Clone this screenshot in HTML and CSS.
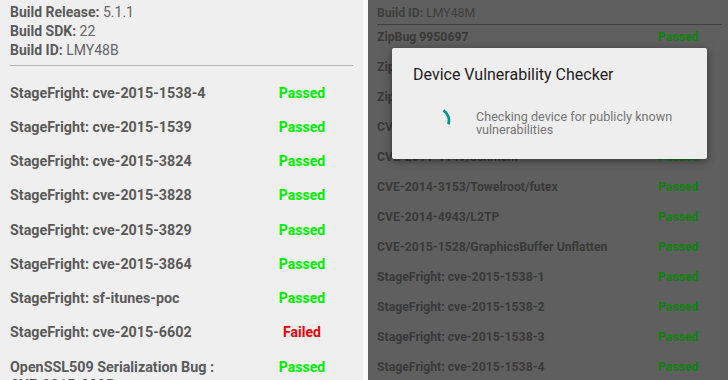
FILE: index.html
```html
<!DOCTYPE html>
<html lang="en">
<head>
    <meta charset="UTF-8">
    <meta name="viewport" content="width=device-width, initial-scale=1.0">
    <title>Device Vulnerability Checker</title>
    <link rel="stylesheet" href="styles.css">
</head>
<body>
    <div class="screens">
        <section class="screen screen-light">
            <div class="build-info">
                <div><b>Build Release:</b> 5.1.1</div>
                <div><b>Build SDK:</b> 22</div>
                <div><b>Build ID:</b> LMY48B</div>
            </div>
            <hr class="divider">
            <ul class="checks">
                <li class="check"><span>StageFright: cve-2015-1538-4</span><span class="status passed">Passed</span></li>
                <li class="check"><span>StageFright: cve-2015-1539</span><span class="status passed">Passed</span></li>
                <li class="check"><span>StageFright: cve-2015-3824</span><span class="status passed">Passed</span></li>
                <li class="check"><span>StageFright: cve-2015-3828</span><span class="status passed">Passed</span></li>
                <li class="check"><span>StageFright: cve-2015-3829</span><span class="status passed">Passed</span></li>
                <li class="check"><span>StageFright: cve-2015-3864</span><span class="status passed">Passed</span></li>
                <li class="check"><span>StageFright: sf-itunes-poc</span><span class="status passed">Passed</span></li>
                <li class="check"><span>StageFright: cve-2015-6602</span><span class="status failed">Failed</span></li>
                <li class="check"><span>OpenSSL509 Serialization Bug : <span class="cve-id">CVE-2015-3825</span></span><span class="status passed">Passed</span></li>
            </ul>
        </section>

        <section class="screen screen-dim">
            <div class="build-info">
                <div><b>Build SDK:</b> 22</div>
                <div><b>Build ID:</b> LMY48M</div>
            </div>
            <hr class="divider">
            <ul class="checks">
                <li class="check"><span>ZipBug 9950697</span><span class="status passed">Passed</span></li>
                <li class="check"><span>ZipBug 8219321</span><span class="status passed">Passed</span></li>
                <li class="check"><span>ZipBug 9695860</span><span class="status passed">Passed</span></li>
                <li class="check"><span>CVE-2013-6282/put_user/get_user</span><span class="status passed">Passed</span></li>
                <li class="check"><span>CVE-2011-1149/ashmem</span><span class="status passed">Passed</span></li>
                <li class="check"><span>CVE-2014-3153/Towelroot/futex</span><span class="status passed">Passed</span></li>
                <li class="check"><span>CVE-2014-4943/L2TP</span><span class="status passed">Passed</span></li>
                <li class="check"><span>CVE-2015-1528/GraphicsBuffer Unflatten</span><span class="status passed">Passed</span></li>
                <li class="check"><span>StageFright: cve-2015-1538-1</span><span class="status passed">Passed</span></li>
                <li class="check"><span>StageFright: cve-2015-1538-2</span><span class="status passed">Passed</span></li>
                <li class="check"><span>StageFright: cve-2015-1538-3</span><span class="status passed">Passed</span></li>
                <li class="check"><span>StageFright: cve-2015-1538-4</span><span class="status passed">Passed</span></li>
            </ul>

            <div class="dialog">
                <div class="dialog-title">Device Vulnerability Checker</div>
                <div class="dialog-body">
                    <svg class="spinner" width="32" height="32" viewBox="0 0 32 32">
                        <path d="M23.46 5.35 A13 13 0 0 1 28.56 19.36" fill="none" stroke="#009688" stroke-width="2.8"/>
                    </svg>
                    <div class="dialog-message">Checking device for publicly known vulnerabilities</div>
                </div>
            </div>
        </section>
    </div>
</body>
</html>
```

FILE: styles.css
```css
body {
    margin: 0;
    padding: 0;
    background-color: #f9f9f9;
    font-family: Roboto, "Liberation Sans", sans-serif;
}
.screens {
    display: flex;
    gap: 5px;
    height: 380px;
    overflow: hidden;
}
.screen {
    position: relative;
    overflow: hidden;
}

/* Left screen: results list */
.screen-light {
    width: 363px;
    background-color: #efefef;
    padding: 0 10px;
    box-sizing: border-box;
    color: #5a5a5a;
}
.screen-light .build-info {
    padding-top: 3px;
    font-size: 14px;
    line-height: 19.2px;
}
.build-info b {
    font-weight: 700;
}
.screen-light .build-info div {
    color: #666;
}
.screen-light .build-info b {
    color: #5a5a5a;
}
.divider {
    margin: 0;
    border: none;
    height: 1px;
}
.screen-light .divider {
    margin-top: 4px;
    background-color: #b4b4b4;
}
.checks {
    list-style: none;
    margin: 0;
    padding: 0;
}
.check {
    display: grid;
    grid-template-columns: 1fr 80px;
    font-weight: 700;
    box-sizing: border-box;
}
.status {
    text-align: center;
}
.cve-id {
    white-space: nowrap;
}
.screen-light .checks {
    margin-top: 10px;
    padding-right: 11px;
}
.screen-light .check {
    font-size: 14.3px;
    line-height: 18px;
    padding: 8px 0 8.25px;
    min-height: 34.25px;
}
.screen-light .status {
    font-size: 14px;
}
.screen-light .passed {
    color: #00f000;
}
.screen-light .failed {
    color: #f20000;
}

/* Right screen: list dimmed behind the progress dialog */
.screen-dim {
    flex: 1;
    background-color: #5f5f5f;
    padding: 0 6px 0 9px;
    color: #393939;
}
.screen-dim .build-info {
    margin-top: -12px;
    font-size: 12.25px;
    line-height: 16.8px;
}
.screen-dim .build-info div {
    color: #3e3e3e;
}
.screen-dim .divider {
    margin-top: 2.4px;
    background-color: #404040;
}
.screen-dim .checks {
    padding-right: 4px;
}
.screen-dim .check {
    font-size: 12.25px;
    line-height: 16px;
    height: 30px;
    padding: 4.5px 0 9.5px;
}
.screen-dim .passed {
    color: #10820f;
}

.dialog {
    position: absolute;
    top: 48px;
    left: 24px;
    width: 315px;
    height: 111px;
    box-sizing: border-box;
    padding: 17px 0 0;
    background-color: #eeeeee;
    border-radius: 2px;
    box-shadow: 0 2px 8px rgba(0, 0, 0, 0.45);
}
.dialog-title {
    padding-left: 21px;
    font-size: 16px;
    line-height: 20px;
    color: #212121;
}
.dialog-body {
    display: flex;
    align-items: flex-start;
    gap: 24px;
    margin-top: 20px;
    padding: 0 20px 0 28px;
}
.spinner {
    flex-shrink: 0;
}
.dialog-message {
    flex: 1;
    margin-top: 4.5px;
    font-size: 12.6px;
    line-height: 13.6px;
    color: #767676;
}
```
